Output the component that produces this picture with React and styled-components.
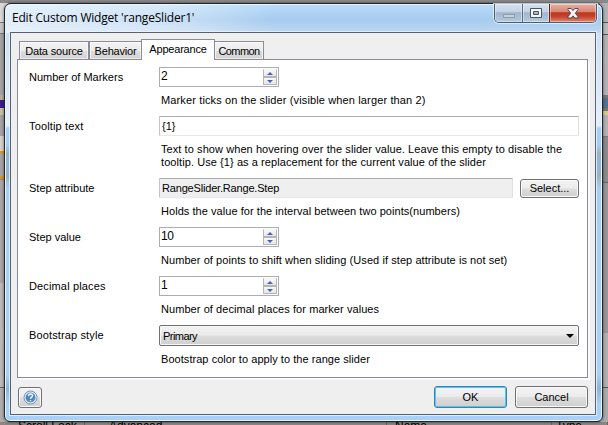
import React from "react";
import styled, { createGlobalStyle, css } from "styled-components";

const GlobalStyle = createGlobalStyle`
  * { box-sizing: border-box; }
  html, body { margin: 0; padding: 0; overflow: hidden; }
  body { font: 11px/13px "Liberation Sans", Arial, sans-serif; color: #000; }
  button, input { font: inherit; color: inherit; margin: 0; }
`;

const Desktop = styled.div`
  position: relative;
  width: 608px;
  height: 425px;
  padding: 3px 5px 3px 4px;
  overflow: hidden;
  background: #7e7b7c;
`;

const Backdrop = styled.div`
  position: absolute;
  inset: 0;
  display: grid;
  grid-template: 3px 1fr 3px / 8px 1fr 8px;
  background: linear-gradient(#8a8888, #6c696a);
`;

const LeftEdge = styled.div`
  grid-area: 2 / 1;
  background: linear-gradient(
    #d8d8d8 0 19px, #777 19px 20px, #c6c6c6 20px 30px, #777 30px 31px,
    #a5a2a3 31px 92px, #b5ae98 92px 97px, #3b1c8c 97px 105px, #c5bfa4 105px 112px,
    #a5a2a3 112px 133px, #d2d0c8 133px 148px, #d69a25 148px 151px, #a7a3a2 151px 173px,
    #d69a25 173px 176px, #8b8889 176px 177px, #aaa5a6 177px 280px, #bcb9ba 280px 384px,
    #666 384px 385px, #b0adae 385px
  );
`;

const RightEdge = styled.div`
  grid-area: 2 / 3;
  background: linear-gradient(
    #b3b1b2 0 19px, #555 19px 20px, #bab8b8 20px 31px, #555 31px 32px,
    #b5b1b3 32px 92px, #7c7878 92px 95px, #55728e 95px 105px, #777 105px 108px,
    #d6ca8f 108px 112px, #b5b0b3 112px 133px, #777 133px 134px, #8e8a8c 134px 179px,
    #666 179px 180px, #9b959a 180px 330px, #b3afb0 330px 384px, #555 384px 385px, #aaa 385px
  );
`;

const BottomEdge = styled.div`
  grid-area: 3 / 1 / 4 / 4;
  display: flex;
  overflow: hidden;
  background: #8b8584;
  font-size: 12px;
  line-height: 9px;
`;

const BackdropText = styled.span`
  flex: none;
  width: ${(p) => p.$width}px;
  height: 9px;
  padding-left: ${(p) => p.$indent}px;
  white-space: nowrap;
  border-right: 1px solid #6a6666;
`;

const Dialog = styled.section`
  position: relative;
  height: 419px;
  padding: 0 6px 6px 5px;
  display: flex;
  flex-direction: column;
  border: 1px solid #20262d;
  border-radius: 7px 7px 6px 6px;
  box-shadow: inset 0 0 0 1px #eaf6ff, 0 0 3px rgba(0, 0, 0, 0.55);
  background:
    linear-gradient(90deg, rgba(255,255,255,.65), rgba(255,255,255,.42) 27%, rgba(255,255,255,0) 45%) 0 0 / 100% 29px no-repeat,
    linear-gradient(#b9dcfb, #a7cbee 55%, #bdd9f3) 0 0 / 100% 29px no-repeat,
    linear-gradient(#d0dff3 29px, #e6eef8 122px, #a8d0fa 124px, #a4cdf7 141px, #9db3bd 149px, #92b8dc 161px, #9db3bd 172px, #a8cef5 184px, #a8d0fa 370px, #8fb3d8 385px, #a9d0f7 400px);
`;

const TitleBar = styled.header`
  flex: 0 0 28px;
  display: flex;
  justify-content: space-between;
  align-items: flex-start;
`;

const Title = styled.h1`
  margin: 0;
  padding-left: 2px;
  font: 400 12px/27px "Open Sans", "Noto Sans", sans-serif;
  letter-spacing: -0.2px;
  white-space: nowrap;
`;

const WindowControls = styled.div`
  display: flex;
  width: 103px;
  height: 19px;
  margin-right: -1px;
  border: 1px solid #4c5d70;
  border-top: 0;
  border-radius: 0 0 5px 5px;
  overflow: hidden;
  box-shadow: 0 0 0 1px rgba(235, 246, 255, 0.75);
`;

const closeFace = css`
  background: linear-gradient(#e8b0a3, #d88372 45%, #bd351e 48%, #c6432d 70%, #dd8a72);
  border-left: 1px solid #6e2019;
`;
const plainFace = css`
  background: linear-gradient(#d4e1ef, #c3d3e4 45%, #a0b4cb 48%, #b6cbe2);
  border-left: 1px solid #5c6f84;
`;

const WindowButton = styled.button`
  display: grid;
  place-items: center;
  flex: 0 0 ${(p) => p.$width}px;
  height: 18px;
  padding: 0;
  border: 0;
  ${(p) => (p.$close ? closeFace : plainFace)}
  box-shadow: inset 0 0 0 1px rgba(255, 255, 255, 0.4);
  &:first-child { border-left: 0; }
`;

const Client = styled.div`
  flex: 1;
  display: flex;
  flex-direction: column;
  padding: 6px 7px 6px 6px;
  border: 1px solid #56626f;
  background: #efefef;
  box-shadow: 0 0 0 1px rgba(233, 245, 255, 0.8);
`;

const TabStrip = styled.nav`
  flex: 0 0 20px;
  display: flex;
  align-items: flex-end;
  padding-left: 2px;
`;

const Tab = styled.button`
  position: relative;
  width: ${(p) => p.$width}px;
  height: 18px;
  padding: 1px 0 0;
  border: 1px solid #898c95;
  border-bottom: 0;
  margin-right: ${(p) => p.$gap || 0}px;
  background: linear-gradient(#f3f3f3, #ececec 50%, #dedede 52%, #d2d2d2);
  box-shadow: inset 0 0 0 1px rgba(255, 255, 255, 0.6);
  white-space: nowrap;
  letter-spacing: ${(p) => p.$track || 0}px;
  ${(p) => p.$active && css`
    z-index: 1;
    height: 21px;
    margin-bottom: -1px;
    padding: 0 0 1px;
    background: #fff;
  `}
`;

const Panel = styled.main`
  flex: 0 0 319px;
  padding: 7px 7px 0 11px;
  border: 1px solid #898c95;
  background: #fff;
  box-shadow: 2px 2px 0 #fbfbfb;
`;

const Row = styled.div`
  display: grid;
  grid-template-columns: 130px 420px;
  height: ${(p) => p.$height || 49}px;
`;

const Label = styled.label`
  padding-top: 4px;
  letter-spacing: ${(p) => p.$track || 0}px;
  white-space: nowrap;
`;

const Control = styled.div`
  display: flex;
  justify-content: space-between;
  align-items: center;
  height: ${(p) => p.$height || 20}px;
`;

const Hint = styled.p`
  margin: 7px 0 0 2px;
  white-space: pre;
  letter-spacing: ${(p) => p.$track || 0}px;
`;

const TextField = styled.input`
  width: ${(p) => p.$width || 420}px;
  height: 20px;
  padding: 0 0 1px 2px;
  border: 1px solid;
  border-color: #abadb3 #dbdfe6 #e3e9ef #c3c6cc;
  border-radius: 1px;
  outline: 0;
  background: ${(p) => (p.readOnly ? "#efefef" : "#fff")};
  letter-spacing: ${(p) => p.$track || 0}px;
`;

const SpinBox = styled.div`
  display: flex;
  width: 120px;
  height: 20px;
  border: 1px solid #abadb3;
  padding: 1px;
`;

const SpinValue = styled.input`
  flex: 1;
  min-width: 0;
  padding: 0 0 2px;
  border: 0;
  outline: 0;
  font-size: 12px;
  letter-spacing: -0.5px;
`;

const SpinButtons = styled.div`
  display: grid;
  grid-template-rows: 8px 8px;
  width: 14px;
`;

const SpinButton = styled.button`
  display: grid;
  place-items: center;
  padding: 0;
  border: 1px solid #b5b5b5;
  border-top-color: ${(p) => (p.$up ? "#f4f4f4" : "#b5b5b5")};
  background: linear-gradient(#f8f8f8, #e6e6e6);
`;

const Push = styled.button`
  width: ${(p) => p.$width}px;
  height: ${(p) => p.$height || 22}px;
  padding: 0;
  display: grid;
  place-items: center;
  border: 1px solid ${(p) => (p.$default ? "#3c7fb1" : "#707070")};
  border-radius: 3px;
  background: linear-gradient(#f3f3f3, #ebebeb 49%, #dddddd 51%, #cfcfcf);
  box-shadow: inset 0 0 0 1px ${(p) => (p.$default ? "#4fc9f2" : "#fafafa")};
`;

const Combo = styled.button`
  display: flex;
  align-items: center;
  justify-content: space-between;
  width: 420px;
  height: 21px;
  padding: 1px 4px 0 3px;
  border: 1px solid #707070;
  border-radius: 2px;
  background: linear-gradient(#f2f2f2, #ebebeb 49%, #dddddd 51%, #cfcfcf);
  box-shadow: inset 0 0 0 1px #f8f8f8;
  letter-spacing: -0.55px;
`;

const Footer = styled.footer`
  display: flex;
  align-items: center;
  gap: 8px;
  margin-top: 8px;
  padding-left: 1px;
`;

const Spacer = styled.span`
  flex: 1;
`;

function Arrow({ up }) {
  return (
    <svg width="6" height="3" viewBox="0 0 6 3">
      <path d={up ? "M3 0L6 3H0Z" : "M0 0H6L3 3Z"} fill="#4a62b5" />
    </svg>
  );
}

function Spinner({ value }) {
  return (
    <SpinBox>
      <SpinValue defaultValue={value} />
      <SpinButtons>
        <SpinButton $up aria-label="Increase"><Arrow up /></SpinButton>
        <SpinButton aria-label="Decrease"><Arrow /></SpinButton>
      </SpinButtons>
    </SpinBox>
  );
}

function Field({ label, hint, height, controlHeight, track, hintTrack, children }) {
  return (
    <Row $height={height}>
      <Label $track={track}>{label}</Label>
      <div>
        <Control $height={controlHeight}>{children}</Control>
        <Hint $track={hintTrack}>{hint}</Hint>
      </div>
    </Row>
  );
}

export default function App() {
  return (
    <Desktop>
      <GlobalStyle />
      <Backdrop>
        <LeftEdge />
        <RightEdge />
        <BottomEdge>
          <BackdropText $width={85} $indent={18}>Scroll Lock</BackdropText>
          <BackdropText $width={302} $indent={24}>Advanced</BackdropText>
          <BackdropText $width={165} $indent={8}>Name</BackdropText>
          <BackdropText $width={56} $indent={4}>Type</BackdropText>
        </BottomEdge>
      </Backdrop>
      <Dialog>
        <TitleBar>
          <Title>Edit Custom Widget 'rangeSlider1'</Title>
          <WindowControls>
            <WindowButton $width={27} aria-label="Minimize">
              <svg width="12" height="13" viewBox="0 0 12 13">
                <rect x=".5" y="7.5" width="11" height="3" fill="#c8d3de" stroke="#8d9cac" />
              </svg>
            </WindowButton>
            <WindowButton $width={27} aria-label="Maximize">
              <svg width="12" height="10" viewBox="0 0 12 10">
                <path d="M.5.5h11v9H.5zM3.500 3.500v3h5v-3z" fill="#f7f8fa" fillRule="evenodd" stroke="#485365" />
              </svg>
            </WindowButton>
            <WindowButton $width={47} $close aria-label="Close">
              <svg width="12" height="11" viewBox="0 0 12 11">
                <path d="M1 .5h3.200L6 2.600 7.800.5H11v1.200L8.300 5.200 11 8.700v1.300H7.800L6 7.800 4.200 10H1V8.700l2.700-3.500L1 1.700z" fill="#f8f8f8" stroke="#59475a" />
              </svg>
            </WindowButton>
          </WindowControls>
        </TitleBar>
        <Client>
          <TabStrip>
            <Tab $width={70} $track={-0.15}>Data source</Tab>
            <Tab $width={53} $gap={-1} $track={-0.2}>Behavior</Tab>
            <Tab $width={74} $gap={-1} $track={-0.2} $active>Appearance</Tab>
            <Tab $width={50} $track={-0.6}>Common</Tab>
          </TabStrip>
          <Panel>
            <Field label="Number of Markers" hintTrack={0.13} hint="Marker ticks on the slider (visible when larger than 2)">
              <Spinner value="2" />
            </Field>
            <Field
              label="Tooltip text"
              track={0.15}
              height={62}
              hintTrack={0.075}
              hint={"Text to show when hovering over the slider value. Leave this empty to disable the\ntooltip. Use {1} as a replacement for the current value of the slider"}
            >
              <TextField defaultValue="{1}" />
            </Field>
            <Field label="Step attribute" hintTrack={0.05} hint="Holds the value for the interval between two points(numbers)">
              <TextField $width={354} $track={-0.18} readOnly value="RangeSlider.Range.Step" />
              <Push $width={59} $height={19}>Select...</Push>
            </Field>
            <Field label="Step value" hintTrack={0.07} hint="Number of points to shift when sliding (Used if step attribute is not set)">
              <Spinner value="10" />
            </Field>
            <Field label="Decimal places" track={0.14} hintTrack={0.07} hint="Number of decimal places for marker values">
              <Spinner value="1" />
            </Field>
            <Field label="Bootstrap style" track={0.13} controlHeight={21} hintTrack={0.05} hint="Bootstrap color to apply to the range slider">
              <Combo>
                Primary
                <svg width="8" height="4" viewBox="0 0 8 4"><path d="M0 0H8L4 4Z" /></svg>
              </Combo>
            </Field>
          </Panel>
          <Footer>
            <Push $width={24} $height={21} aria-label="Help">
              <svg width="15" height="15" viewBox="0 0 15 15">
                <circle cx="7.500" cy="7.500" r="6.500" fill="#f4f8fc" stroke="#7291bd" />
                <circle cx="7.500" cy="7.500" r="5" fill="#4f86c6" />
                <path d="M5.500 6c0-2.600 4-2.600 4-.3 0 1.500-2 1.400-2 3M7.500 10v1.200" fill="none" stroke="#fff" strokeWidth="1.400" />
              </svg>
            </Push>
            <Spacer />
            <Push $width={73} $default>OK</Push>
            <Push $width={73}>Cancel</Push>
          </Footer>
        </Client>
      </Dialog>
    </Desktop>
  );
}
